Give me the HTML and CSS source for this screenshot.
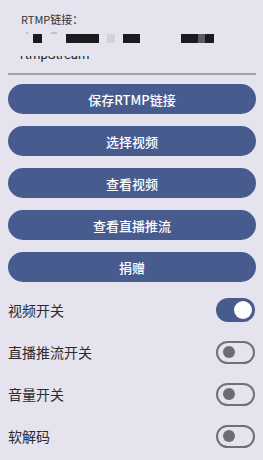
FILE: index.html
```html
<!DOCTYPE html>
<html lang="zh-CN">
<head>
    <meta charset="UTF-8">
    <meta name="viewport" content="width=device-width, initial-scale=1.0">
    <title>RTMP推流</title>
    <link rel="stylesheet" href="styles.css">
</head>
<body>
    <div class="page">
        <!-- RTMP 输入框 -->
        <div class="field">
            <div class="field-label">RTMP链接：</div>
            <div class="masked">
                <span class="speck s1"></span>
                <span class="blk b1"></span>
                <span class="speck s2"></span>
                <span class="blk b2"></span>
                <span class="blk b3"></span>
                <span class="blk b4"></span>
                <span class="blk b5"></span>
            </div>
            <div class="field-clip">
                <div class="field-text">rtmpStream</div>
            </div>
        </div>

        <!-- 按钮 -->
        <div class="actions">
            <button class="btn">保存RTMP链接</button>
            <button class="btn">选择视频</button>
            <button class="btn">查看视频</button>
            <button class="btn">查看直播推流</button>
            <button class="btn">捐赠</button>
        </div>

        <!-- 开关 -->
        <div class="switches">
            <div class="row">
                <span>视频开关</span>
                <span class="switch on"><span class="knob"></span></span>
            </div>
            <div class="row">
                <span>直播推流开关</span>
                <span class="switch"><span class="knob"></span></span>
            </div>
            <div class="row">
                <span>音量开关</span>
                <span class="switch"><span class="knob"></span></span>
            </div>
            <div class="row">
                <span>软解码</span>
                <span class="switch"><span class="knob"></span></span>
            </div>
        </div>
    </div>
</body>
</html>
```

FILE: styles.css
```css
body {
    margin: 0;
    background-color: #e4e3ee;
    font-family: "Noto Sans CJK SC", "Noto Sans", sans-serif;
    color: #2b2b30;
}

.page {
    padding: 12px 7px 0 8px;
}

.field {
    border-bottom: 2px solid #a2a2aa;
    padding-bottom: 9px;
}

.field-label {
    margin-left: 13px;
    font-size: 11px;
    line-height: 14px;
    color: #333;
}

.masked {
    display: flex;
    align-items: flex-start;
    height: 9px;
    margin-top: 8px;
}

.blk {
    display: block;
    height: 9px;
    background-color: #1b1b1f;
}

.speck {
    display: block;
    width: 2px;
    height: 2px;
    margin-top: -2px;
    background-color: #c0c0c8;
}

.s1 { margin-left: 18px; }
.b1 { margin-left: 5px; width: 9px; }
.s2 { margin-left: 9px; width: 6px; }
.b2 { margin-left: 9px; width: 33px; }
.b3 { margin-left: 8px; width: 8px; background-color: #d2d2da; }
.b4 { margin-left: 8px; width: 17px; }
.b5 {
    margin-left: 41px;
    width: 33px;
    background: linear-gradient(to right, #1b1b1f 0 17px, #5a5a60 17px 24px, #1b1b1f 24px);
}

.field-clip {
    height: 8px;
    margin-top: 13px;
    margin-left: 12px;
    overflow: hidden;
}

.field-text {
    margin-top: -9px;
    font-family: Roboto, sans-serif;
    font-size: 13px;
    line-height: 16px;
    color: #1f1f24;
}

.actions {
    display: flex;
    flex-direction: column;
    gap: 12px;
    margin-top: 9px;
}

.btn {
    height: 30px;
    border: none;
    border-radius: 15px;
    background-color: #475b8f;
    color: #fff;
    font-family: "Noto Sans CJK SC", sans-serif;
    font-size: 13px;
    font-weight: 500;
    padding: 0;
}

.switches {
    margin-top: 7px;
}

.row {
    display: flex;
    align-items: center;
    justify-content: space-between;
    height: 42px;
    font-size: 14px;
}

.switch {
    box-sizing: border-box;
    display: flex;
    align-items: center;
    width: 39px;
    height: 23px;
    margin-right: 1px;
    border: 2px solid #707076;
    border-radius: 12px;
    padding-left: 5px;
}

.switch .knob {
    width: 12px;
    height: 12px;
    border-radius: 50%;
    background-color: #6c6c72;
}

.switch.on {
    height: 24px;
    border: none;
    background-color: #475b8f;
    justify-content: flex-end;
    padding: 0 3px 0 0;
}

.switch.on .knob {
    width: 18px;
    height: 18px;
    background-color: #fff;
}
```
